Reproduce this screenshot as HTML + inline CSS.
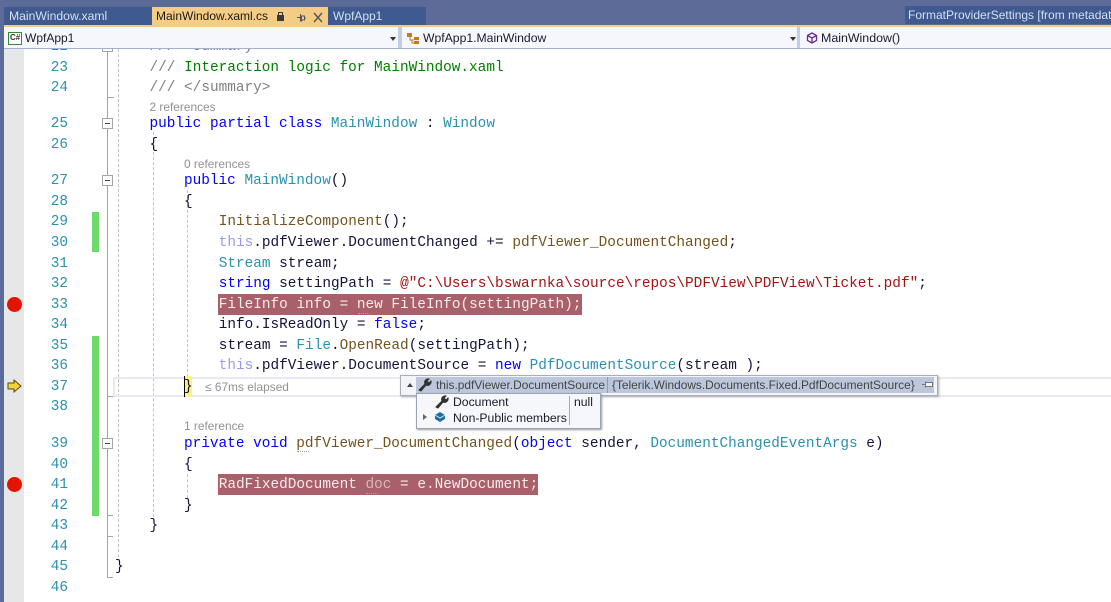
<!DOCTYPE html>
<html><head><meta charset="utf-8"><style>
html,body{margin:0;padding:0;width:1111px;height:602px;overflow:hidden;background:#fff}
.a{position:absolute}
#r{position:relative;width:1111px;height:602px;overflow:hidden;background:#fff}
.c,.n{position:absolute;font:14.4px/20px "Liberation Mono",monospace;white-space:pre;height:20px;color:#14143c;margin-top:1px}
.n{left:30px;width:38px;text-align:right;color:#2b91af;letter-spacing:0}
.k{color:#0000ff}.t{color:#2b91af}.m{color:#74531f}.g{color:#008000}.y{color:#808080}.s{color:#a31515}.h{color:#9a9af5}
.ref{position:absolute;font:11.900px/14px "Liberation Sans",sans-serif;color:#929292;white-space:pre}
.ui{position:absolute;font:12.200px/18px "Liberation Sans",sans-serif;white-space:pre}
.bp{position:absolute;background:#a9606a;height:21px}
.bp+.c,.w{color:#f6ecec}
.box{position:absolute;left:102px;width:9px;height:9px;border:1px solid #a5a5a5;background:#fff}
.box:after{content:"";position:absolute;left:2px;top:4px;width:5px;height:1px;background:#444}
.d{position:absolute;width:0;border-left:1px dashed #c4c4c4}
.o{position:absolute;background:#a5a5a5}
.dot{position:absolute;left:7px;width:15px;height:15px;border-radius:50%;background:#e51400}
.u{position:absolute;height:0;border-top:1px dotted #a0a0a0}
</style></head><body><div id="r">
<!-- chrome -->
<div class="a" style="left:0;top:0;width:1111px;height:27px;background:#5d6b99"></div>
<div class="a" style="left:4px;top:7px;width:148px;height:18px;background:#3e5a8e"></div>
<div class="a" style="left:152px;top:7px;width:176px;height:19px;background:#f5cc84"></div>
<div class="a" style="left:328px;top:7px;width:98px;height:18px;background:#3e5a8e"></div>
<div class="a" style="left:905px;top:6px;width:206px;height:18px;background:#3e5a8e"></div>
<div class="a" style="left:4px;top:25px;width:1107px;height:2px;background:#f5cc84"></div>
<div class="ui" style="left:9px;top:7px;color:#d5dff5">MainWindow.xaml</div>
<div class="ui" style="left:156px;top:7px;color:#1a1a1a;font-size:12px">MainWindow.xaml.cs</div>
<div class="a" style="left:277px;top:15px;width:7px;height:6px;background:#3a3a3a"></div>
<div class="a" style="left:278px;top:12px;width:3px;height:3px;border:1px solid #3a3a3a;border-bottom:0"></div>
<svg class="a" style="left:295px;top:11px" width="32" height="12" fill="none" stroke="#555"><path d="M2 6.500h3M5.500 3v7h1V5h3v4h-3M9 7h2"/><path d="M19 2l8 9M27 2l-8 9" stroke-width="1.400"/></svg>
<div class="ui" style="left:333px;top:7px;color:#d5dff5;font-size:12px">WpfApp1</div>
<div class="ui" style="left:908px;top:6px;color:#d5dff5;font-size:12px">FormatProviderSettings [from metadata]</div>
<!-- nav -->
<div class="a" style="left:4px;top:27px;width:1107px;height:21px;background:#f5f7fc"></div>
<div class="a" style="left:4px;top:48px;width:1107px;height:1px;background:#a3b2d4"></div>
<div class="a" style="left:398px;top:27px;width:4px;height:21px;background:#c2cde6"></div>
<div class="a" style="left:797px;top:27px;width:3px;height:21px;background:#c2cde6"></div>
<div class="a" style="left:8px;top:32px;width:12px;height:11px;border:1px solid #388a34;background:#fff"></div>
<div class="a" style="left:10px;top:33px;font:bold 8px/10px 'Liberation Sans',sans-serif;color:#333">C#</div>
<div class="ui" style="left:25px;top:29px;color:#1a1a2a;font-size:12px">WpfApp1</div>
<div class="a" style="left:390px;top:37px;border:3px solid transparent;border-top:4px solid #333"></div>
<div class="a" style="left:790px;top:37px;border:3px solid transparent;border-top:4px solid #333"></div>
<svg class="a" style="left:406px;top:30px" width="15" height="15"><path d="M1 3h5v4H1zM8 7h5v3H8zM8 11h5v3H8z" fill="#c27d1a"/><path d="M4 7v3h4M6 10v3h2" stroke="#c27d1a" fill="none"/></svg>
<div class="ui" style="left:423px;top:29px;color:#1a1a2a">WpfApp1.MainWindow</div>
<svg class="a" style="left:806px;top:32px" width="12" height="12" fill="none" stroke="#652d90" stroke-width="1.300"><path d="M6 1l4.500 2.500v5L6 11 1.500 8.500v-5zM1.500 3.500L6 6l4.500-2.500M6 6v5"/></svg>
<div class="ui" style="left:821px;top:29px;color:#1a1a2a;font-size:12.400px">MainWindow()</div>
<!-- margins -->
<div class="a" style="left:0;top:27px;width:4px;height:575px;background:#5d6b99"></div>
<div class="a" style="left:4px;top:49px;width:20px;height:553px;background:#e6e7e8"></div>
<div class="a" style="left:92px;top:212px;width:7px;height:40px;background:#6bdc6b"></div>
<div class="a" style="left:92px;top:336px;width:7px;height:180px;background:#6bdc6b"></div>
<!-- outline -->
<div class="o" style="left:107px;top:49px;width:1px;height:508px"></div>
<div class="o" style="left:107px;top:97px;width:7px;height:1px"></div>
<div class="o" style="left:107px;top:396px;width:7px;height:1px"></div>
<div class="o" style="left:107px;top:515px;width:6px;height:1px"></div>
<div class="o" style="left:107px;top:536px;width:6px;height:1px"></div>
<div class="o" style="left:107px;top:536px;width:1px;height:41px"></div>
<div class="o" style="left:107px;top:577px;width:6px;height:1px"></div>
<div class="a" style="left:102px;top:49px;width:9px;height:2px;border:1px solid #a5a5a5;border-top:0;background:#fff"></div>
<div class="box" style="top:118px"></div>
<div class="box" style="top:175px"></div>
<div class="box" style="top:438px"></div>
<div class="d" style="left:118px;top:49px;height:508px"></div>
<div class="d" style="left:153px;top:132px;height:385px"></div>
<div class="d" style="left:187px;top:190px;height:187px"></div>
<div class="d" style="left:187px;top:474px;height:24px"></div>
<!-- current line -->
<div class="a" style="left:113px;top:377px;width:998px;height:16px;border:2px solid #e9e9ef;border-width:2px 0 2px 2px"></div>
<div class="a" style="left:184px;top:376px;width:8px;height:21px;background:#fff181"></div>
<div class="a" style="left:184px;top:376px;width:1px;height:21px;background:#000"></div>
<svg class="a" style="left:7px;top:379px" width="15" height="14"><path d="M1 4h6V1l7 6-7 6v-3H1z" fill="#f3d23b" stroke="#5a4a10"/></svg>
<div class="dot" style="top:297px"></div>
<div class="dot" style="top:477px"></div>
<!-- line numbers -->
<div class="n" style="top:36px;clip-path:inset(12px 0 0 0)">22</div>
<div class="n" style="top:57px">23</div><div class="n" style="top:77px">24</div><div class="n" style="top:113px">25</div><div class="n" style="top:134px">26</div><div class="n" style="top:170px">27</div><div class="n" style="top:191px">28</div><div class="n" style="top:211px">29</div><div class="n" style="top:232px">30</div><div class="n" style="top:253px">31</div><div class="n" style="top:273px">32</div><div class="n" style="top:294px">33</div><div class="n" style="top:314px">34</div><div class="n" style="top:335px">35</div><div class="n" style="top:355px">36</div><div class="n" style="top:376px">37</div><div class="n" style="top:396px">38</div><div class="n" style="top:433px">39</div><div class="n" style="top:454px">40</div><div class="n" style="top:474px">41</div><div class="n" style="top:495px">42</div><div class="n" style="top:515px">43</div><div class="n" style="top:536px">44</div><div class="n" style="top:556px">45</div><div class="n" style="top:577px">46</div>
<!-- code -->
<div class="c" style="left:149.500px;top:36px;clip-path:inset(12px 0 0 0)"><span class="y">/// &lt;summary&gt;</span></div>
<div class="c" style="left:149.500px;top:57px"><span class="y">///</span> <span class="g">Interaction logic for MainWindow.xaml</span></div>
<div class="c" style="left:149.500px;top:77px"><span class="y">/// &lt;/summary&gt;</span></div>
<div class="ref" style="left:149.500px;top:100px">2 references</div>
<div class="c" style="left:149.500px;top:113px"><span class="k">public partial class</span> <span class="t">MainWindow</span> : <span class="t">Window</span></div>
<div class="c" style="left:149.500px;top:134px">{</div>
<div class="ref" style="left:184px;top:157px">0 references</div>
<div class="c" style="left:184px;top:170px"><span class="k">public</span> <span class="t">MainWindow</span>()</div>
<div class="c" style="left:184px;top:191px">{</div>
<div class="c" style="left:218.700px;top:211px"><span class="m">InitializeComponent</span>();</div>
<div class="c" style="left:218.700px;top:232px"><span class="h">this</span>.pdfViewer.DocumentChanged += <span class="m">pdfViewer_DocumentChanged</span>;</div>
<div class="c" style="left:218.700px;top:253px"><span class="t">Stream</span> stream;</div>
<div class="c" style="left:218.700px;top:273px"><span class="k">string</span> settingPath = <span class="s">@"C:\Users\bswarnka\source\repos\PDFView\PDFView\Ticket.pdf"</span>;</div>
<div class="bp" style="left:218px;top:294px;width:364px"></div>
<div class="c w" style="left:218.700px;top:294px">FileInfo info = new FileInfo(settingPath);</div>
<div class="u" style="left:358px;top:313px;width:12px"></div>
<div class="c" style="left:218.700px;top:314px">info.IsReadOnly = <span class="k">false</span>;</div>
<div class="c" style="left:218.700px;top:335px">stream = <span class="t">File</span>.<span class="m">OpenRead</span>(settingPath);</div>
<div class="c" style="left:218.700px;top:355px"><span class="h">this</span>.pdfViewer.DocumentSource = <span class="k">new</span> <span class="t">PdfDocumentSource</span>(stream );</div>
<div class="c" style="left:184px;top:376px">}</div>
<div class="ref" style="left:205px;top:380px">≤ 67ms elapsed</div>
<div class="ref" style="left:184px;top:419px">1 reference</div>
<div class="c" style="left:184px;top:433px"><span class="k">private void</span> <span class="m">pdfViewer_DocumentChanged</span>(<span class="k">object</span> sender, <span class="t">DocumentChangedEventArgs</span> e)</div>
<div class="u" style="left:297px;top:451px;width:12px"></div>
<div class="c" style="left:184px;top:454px">{</div>
<div class="bp" style="left:218px;top:474px;width:320px"></div>
<div class="c w" style="left:218.700px;top:474px">RadFixedDocument <span style="color:#d8b8bc">doc</span> = e.NewDocument;</div>
<div class="u" style="left:366px;top:493px;width:12px"></div>
<div class="c" style="left:184px;top:495px">}</div>
<div class="c" style="left:149.500px;top:515px">}</div>
<div class="c" style="left:115px;top:556px">}</div>
<!-- datatip -->
<div class="a" style="left:400px;top:375px;width:536px;height:19px;background:#f2f4f8;border:1px solid #a9aeb8;box-shadow:1px 1px 2px #aaa"></div>
<div class="a" style="left:416px;top:377px;width:518px;height:16px;background:#bcc7dc"></div>
<div class="a" style="left:407px;top:383px;border:3px solid transparent;border-bottom:4px solid #444;border-top:0"></div>
<svg class="a" style="left:418px;top:378px" width="14" height="14"><path d="M1 12l6-6a3.500 3.500 0 0 1 4-5L9 3l2 2 2-2a3.500 3.500 0 0 1-5 4l-5 6z" fill="#333" stroke="#333"/></svg>
<div class="ui" style="left:436px;top:376px;color:#444;font-size:11.900px">this.pdfViewer.DocumentSource</div>
<div class="a" style="left:607px;top:377px;width:1px;height:16px;background:#8f9bb3"></div>
<div class="ui" style="left:612px;top:376px;color:#444;font-size:11.900px">{Telerik.Windows.Documents.Fixed.PdfDocumentSource}</div>
<svg class="a" style="left:921px;top:380px" width="13" height="9" fill="#f4f4f4" stroke="#777"><path d="M1 4.500h3M4.500 1.500v6M4.500 2.500h7v4h-7z"/></svg>
<div class="a" style="left:416px;top:393px;width:183px;height:34px;background:#f5f7fa;border:1px solid #9aa3b3;box-shadow:1px 1px 2px #999"></div>
<div class="a" style="left:569px;top:396px;width:1px;height:29px;background:#aaa"></div>
<svg class="a" style="left:435px;top:395px" width="14" height="14"><path d="M1 12l6-6a3.500 3.500 0 0 1 4-5L9 3l2 2 2-2a3.500 3.500 0 0 1-5 4l-5 6z" fill="#333" stroke="#333"/></svg>
<div class="ui" style="left:453px;top:393px;color:#1a1a2a">Document</div>
<div class="ui" style="left:574px;top:393px;color:#1a1a2a">null</div>
<div class="a" style="left:423px;top:414px;border:3px solid transparent;border-left:4px solid #666;border-right:0"></div>
<svg class="a" style="left:434px;top:411px" width="12" height="12"><path d="M1 4l5-3 5 3v4l-5 3-5-3z" fill="#1c6ea4"/><path d="M1 4l5 3 5-3" stroke="#cfe3f2" fill="none"/></svg>
<div class="ui" style="left:453px;top:409px;color:#1a1a2a">Non-Public members</div>
</div></body></html>
